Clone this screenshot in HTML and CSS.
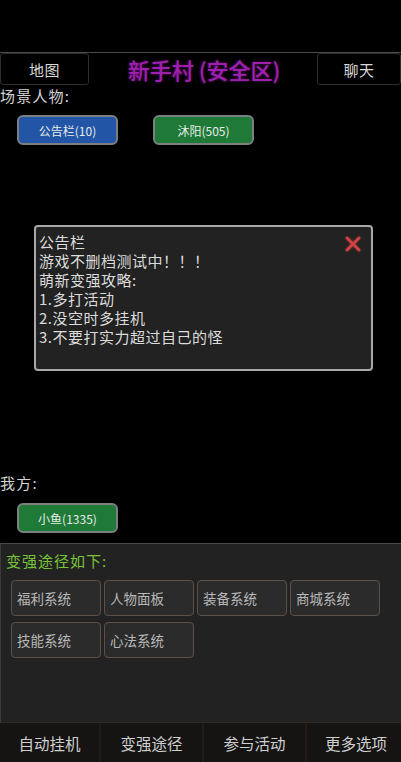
FILE: index.html
```html
<!DOCTYPE html>
<html lang="zh">
<head>
<meta charset="utf-8">
<link rel="stylesheet" href="styles.css">
</head>
<body>
<div class="screen">
  <div class="topgap"></div>
  <div class="header">
    <div class="hbtn hbtn-left">地图</div>
    <div class="title">新手村 (安全区)</div>
    <div class="hbtn hbtn-right">聊天</div>
  </div>
  <div class="label label-scene">场景人物:</div>
  <div class="npcs">
    <div class="chip chip-blue">公告栏(10)</div>
    <div class="chip chip-green">沐阳(505)</div>
  </div>
  <div class="dialog">
    <div class="dialog-text">
      <div>公告栏</div>
      <div>游戏不删档测试中！！！</div>
      <div>萌新变强攻略:</div>
      <div>1.多打活动</div>
      <div>2.没空时多挂机</div>
      <div>3.不要打实力超过自己的怪</div>
    </div>
    <svg class="close" width="18" height="18" viewBox="0 0 18 18">
      <path d="M3 3 L15 15 M15 3 L3 15" stroke="#d04245" stroke-width="2.8" stroke-linecap="round" fill="none"/>
    </svg>
  </div>
  <div class="label label-me">我方:</div>
  <div class="mine">
    <div class="chip chip-green">小鱼(1335)</div>
  </div>
  <div class="panel">
    <div class="panel-title">变强途径如下:</div>
    <div class="grid">
      <div class="gbtn">福利系统</div>
      <div class="gbtn">人物面板</div>
      <div class="gbtn">装备系统</div>
      <div class="gbtn">商城系统</div>
      <div class="gbtn">技能系统</div>
      <div class="gbtn">心法系统</div>
    </div>
  </div>
  <div class="nav">
    <div class="nitem">自动挂机</div>
    <div class="nitem">变强途径</div>
    <div class="nitem">参与活动</div>
    <div class="nitem">更多选项</div>
  </div>
</div>
</body>
</html>
```

FILE: styles.css
```css
html, body {
  margin: 0;
  padding: 0;
  background: #000;
}
body {
  font-family: "Noto Sans CJK SC", "Noto Sans", sans-serif;
  color: #d0d0d0;
}
.screen {
  width: 401px;
  height: 762px;
  overflow: hidden;
  display: flex;
  flex-direction: column;
}
.topgap {
  height: 52px;
  border-bottom: 1px solid #4a4a4a;
  flex: none;
}
.header {
  height: 32px;
  display: flex;
  align-items: stretch;
  flex: none;
}
.hbtn {
  display: flex;
  align-items: center;
  justify-content: center;
  font-size: 15px;
  letter-spacing: 0.5px;
  color: #d8d8d8;
  border: 1px solid #2e2e2e;
  border-radius: 3px;
  box-sizing: border-box;
}
.hbtn-left {
  width: 89px;
}
.hbtn-right {
  width: 84px;
}
.title {
  flex: 1;
  display: flex;
  align-items: center;
  justify-content: center;
  font-size: 22px;
  font-weight: 500;
  color: #9f1fae;
  text-shadow: 0 0 3px rgba(170, 40, 190, 0.6);
  padding-left: 2px;
}
.label {
  font-size: 15px;
  letter-spacing: 1.2px;
  color: #d4d4d4;
  line-height: 20px;
  flex: none;
}
.label-scene {
  margin-top: 1px;
}
.npcs {
  display: flex;
  gap: 35px;
  padding-left: 17px;
  margin-top: 9px;
  flex: none;
}
.chip {
  width: 101px;
  height: 30px;
  box-sizing: border-box;
  border: 2px solid #7b7f82;
  border-radius: 6px;
  display: flex;
  align-items: center;
  justify-content: center;
  font-size: 12px;
  color: #e8ece8;
}
.chip-blue {
  background: #2255a6;
}
.chip-green {
  background: #1f7a38;
}
.dialog {
  position: relative;
  margin: 80px 0 0 34px;
  width: 339px;
  height: 146px;
  box-sizing: border-box;
  border: 2px solid #a8a8a8;
  border-radius: 4px;
  background: #222222;
  padding: 5px 0 0 3px;
  flex: none;
}
.dialog-text {
  font-size: 15px;
  letter-spacing: 0.5px;
  line-height: 19px;
  color: #dcdcdc;
}
.close {
  position: absolute;
  top: 8px;
  right: 9px;
  filter: drop-shadow(0 0 1px rgba(220, 60, 60, 0.6));
}
.label-me {
  margin-top: 102px;
}
.mine {
  padding-left: 17px;
  margin-top: 10px;
  flex: none;
}
.panel {
  margin-top: 10px;
  flex: 1;
  background: #222222;
  border-top: 1px solid #4a4a4a;
  border-left: 1px solid #3a3a3a;
  box-sizing: border-box;
}
.panel-title {
  font-size: 15px;
  letter-spacing: 1px;
  line-height: 20px;
  color: #78c43a;
  padding: 7px 0 0 5px;
}
.grid {
  display: grid;
  grid-template-columns: repeat(4, 90px);
  column-gap: 3px;
  row-gap: 6px;
  padding: 9px 0 0 10px;
}
.gbtn {
  height: 36px;
  box-sizing: border-box;
  border: 1px solid #5e5046;
  border-radius: 4px;
  background: #2b2b2b;
  display: flex;
  align-items: center;
  padding-left: 5px;
  font-size: 13.5px;
  color: #b8b8b8;
}
.nav {
  height: 39px;
  display: flex;
  background: #151413;
  border-top: 1px solid #2e2a26;
  flex: none;
}
.nitem {
  width: 101px;
  box-sizing: border-box;
  display: flex;
  align-items: center;
  justify-content: center;
  font-size: 15.5px;
  color: #cfcfcf;
  border-right: 2px solid #231a14;
  flex: none;
}
.nitem:nth-child(2), .nitem:nth-child(3) {
  width: 103px;
}
.nitem:last-child {
  border-right: none;
  flex: 1;
  padding-left: 4px;
}
```
